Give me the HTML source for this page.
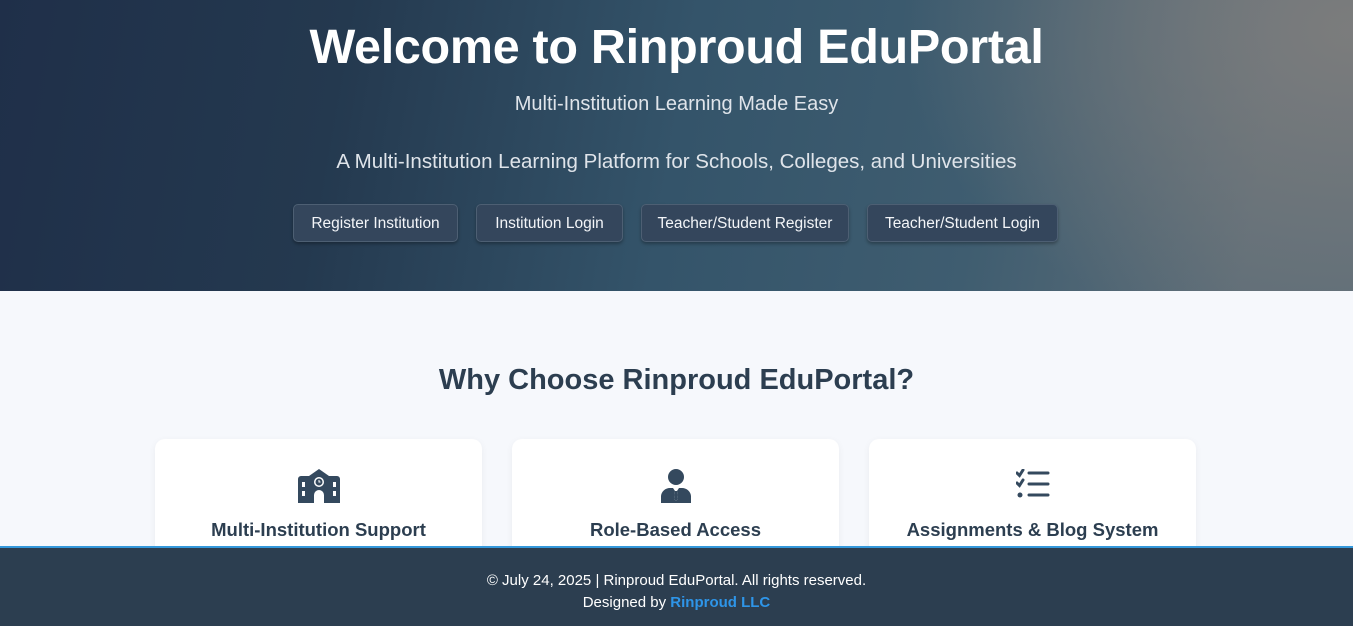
<!DOCTYPE html>
<html><head><meta charset="utf-8"><style>
*{margin:0;padding:0;box-sizing:border-box}
body{width:1353px;height:626px;overflow:hidden;font-family:"Liberation Sans",sans-serif;background:#f6f8fc;position:relative}
.hero{position:absolute;left:0;top:0;width:1353px;height:291px;
background:radial-gradient(ellipse 450px 320px at 1353px 30px,rgba(125,125,125,.95),rgba(120,125,130,0) 100%),
linear-gradient(100deg,#1f2f49 0%,#24394f 25%,#34546a 50%,#3f5d70 72%,#5f6e78 92%);text-align:center;color:#fff}
h1{position:absolute;top:19px;left:0;width:100%;font-size:48.5px;font-weight:bold;letter-spacing:-0.3px}
.sub{position:absolute;top:93px;width:100%;font-size:20px;color:#dfe4ea}
.sub2{position:absolute;top:150px;width:100%;font-size:20.5px;color:#dfe4ea}
.btn{position:absolute;top:204px;height:38px;background:#34465c;border:1px solid #4d5f73;border-radius:5px;color:#f3f5f8;font-size:15.5px;line-height:38px;text-align:center;box-shadow:0 2px 3px rgba(0,0,0,.3)}
h2{position:absolute;top:364px;width:100%;text-align:center;font-size:29px;color:#2c3e50;font-weight:bold}
.card{position:absolute;top:439px;width:327px;height:120px;background:#fff;border-radius:10px;box-shadow:0 2px 8px rgba(0,0,0,.05);text-align:center}
.card svg{position:absolute;top:30px;left:50%;transform:translateX(-50%)}
.card div{position:absolute;top:80px;width:100%;font-size:18.5px;font-weight:bold;color:#2c3e50}
.foot{position:absolute;top:546px;left:0;width:1353px;height:80px;background:#2c3e50;border-top:2px solid #3498db;text-align:center;color:#fff;font-size:15px;line-height:22px;padding-top:22px}
.foot b{color:#2e95e8}
</style></head><body>
<div class="hero">
<h1>Welcome to Rinproud EduPortal</h1>
<div class="sub">Multi-Institution Learning Made Easy</div>
<div class="sub2">A Multi-Institution Learning Platform for Schools, Colleges, and Universities</div>
<div class="btn" style="left:293px;width:165px">Register Institution</div>
<div class="btn" style="left:476px;width:147px">Institution Login</div>
<div class="btn" style="left:641px;width:208px">Teacher/Student Register</div>
<div class="btn" style="left:867px;width:191px">Teacher/Student Login</div>
</div>
<h2>Why Choose Rinproud EduPortal?</h2>
<div class="card" style="left:155px">
<svg width="42" height="34" viewBox="0 0 42 34"><path fill="#34495e" d="M21 0 L31 7 H39 a3 3 0 0 1 3 3 V34 H26 V26 a5 5 0 0 0 -10 0 V34 H0 V10 a3 3 0 0 1 3 -3 H11 Z"/><circle cx="21" cy="13" r="5" fill="#fff"/><circle cx="21" cy="13" r="3.5" fill="#34495e"/><path d="M21 11v2h1.5" stroke="#fff" stroke-width="1" fill="none"/><g fill="#fff"><rect x="4" y="13" width="3" height="5"/><rect x="4" y="22" width="3" height="5"/><rect x="35" y="13" width="3" height="5"/><rect x="35" y="22" width="3" height="5"/></g></svg>
<div>Multi-Institution Support</div></div>
<div class="card" style="left:512px">
<svg width="30" height="34" viewBox="0 0 30 34"><circle cx="15" cy="8" r="8" fill="#34495e"/><path fill="#34495e" d="M0 34 V27 a9 9 0 0 1 9 -8 H21 a9 9 0 0 1 9 8 V34 Z"/><path fill="#fff" d="M12 19 H18 L16 22 L17 30 L15 32 L13 30 L14 22 Z"/><path fill="#34495e" d="M14 22 h2 l1 8 -2 2 -2 -2z"/></svg>
<div>Role-Based Access</div></div>
<div class="card" style="left:869px">
<svg width="34" height="30" viewBox="0 0 34 30"><g stroke="#34495e" stroke-width="3" fill="none" stroke-linecap="round"><path d="M1 4 l2.5 2.5 L7 1"/><path d="M1 14 l2.5 2.5 L7 11"/><line x1="13" y1="4" x2="32" y2="4"/><line x1="13" y1="15" x2="32" y2="15"/><line x1="13" y1="26" x2="32" y2="26"/></g><circle cx="4" cy="26" r="2.5" fill="#34495e"/></svg>
<div>Assignments &amp; Blog System</div></div>
<div class="foot">© July 24, 2025 | Rinproud EduPortal. All rights reserved.<br>Designed by <b>Rinproud LLC</b></div>
</body></html>
